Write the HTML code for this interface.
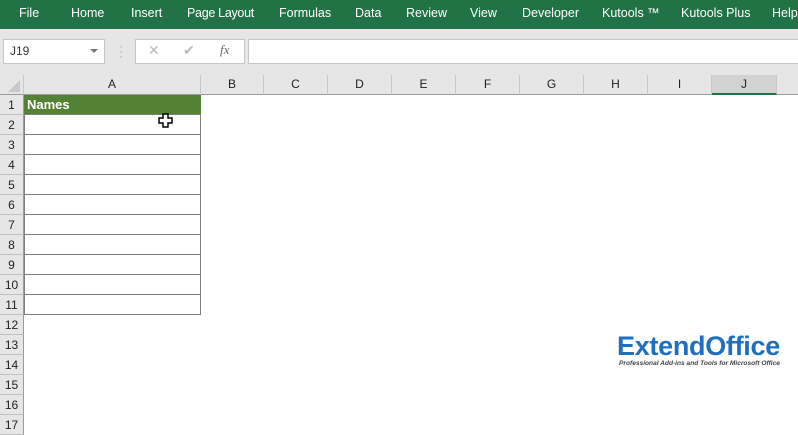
<!DOCTYPE html>
<html><head><style>
*{margin:0;padding:0;box-sizing:border-box}
body{width:798px;height:435px;overflow:hidden;background:#fff;font-family:"Segoe UI","Liberation Sans",sans-serif;position:relative}
.rib{position:absolute;left:0;top:0;width:798px;height:29px;background:#217346;color:#fff;font-size:12.5px}
.rib span{position:absolute;top:6px}
.tb{position:absolute;top:29px;left:0;width:798px;height:46px;background:#e6e6e6}
.box{position:absolute;background:#fff;border:1px solid #c6c6c6}
.ch{position:absolute;top:75px;height:20px;background:#e6e6e6;border-right:1px solid #c8c8c8;border-bottom:1px solid #9b9b9b;font-size:12px;text-align:center;line-height:19px;color:#222}
.rh{position:absolute;left:0;width:24px;height:20px;background:#e6e6e6;border-bottom:1px solid #c0c0c0;border-right:1px solid #9b9b9b;font-size:12px;text-align:center;line-height:20px;color:#222}
.cell{position:absolute;left:24px;width:177px;height:21px;border:1px solid #7f7f7f}
</style></head><body>
<div class="rib">
<span style="left:19px">File</span><span style="left:71px">Home</span><span style="left:131px">Insert</span><span style="left:187px;letter-spacing:-0.3px">Page Layout</span><span style="left:279px">Formulas</span><span style="left:355px">Data</span><span style="left:406px">Review</span><span style="left:470px">View</span><span style="left:522px">Developer</span><span style="left:602px">Kutools ™</span><span style="left:681px">Kutools Plus</span><span style="left:772px">Help</span>
</div>
<div class="tb"></div>
<div class="box" style="left:3px;top:39px;width:102px;height:25px;font-size:12px;line-height:23px;padding-left:6px;color:#333">J19<span style="position:absolute;right:6px;top:9px;border-left:4px solid transparent;border-right:4px solid transparent;border-top:4px solid #777"></span></div>
<div style="position:absolute;left:119px;top:44px;color:#aaa;font-size:12px;line-height:5px">·<br>·<br>·</div>
<div class="box" style="left:135px;top:39px;width:110px;height:25px;color:#bbb;font-size:14px">
<span style="position:absolute;left:12px;top:2px">✕</span><span style="position:absolute;left:47px;top:2px">✔</span><span style="position:absolute;left:84px;top:2px;font-family:'Liberation Serif',serif;font-style:italic;color:#666;font-size:13px">fx</span></div>
<div class="box" style="left:248px;top:39px;width:552px;height:25px"></div>
<div class="ch" style="left:0;width:24px;border-right:1px solid #c8c8c8"><svg width="18" height="18" style="position:absolute;left:4px;top:1px"><polygon points="16,4 16,16 4,16" fill="#c8c8c8"/></svg></div>
<div class="ch" style="left:24px;width:177px">A</div>
<div class="ch" style="left:201px;width:63px">B</div>
<div class="ch" style="left:264px;width:64px">C</div>
<div class="ch" style="left:328px;width:64px">D</div>
<div class="ch" style="left:392px;width:64px">E</div>
<div class="ch" style="left:456px;width:64px">F</div>
<div class="ch" style="left:520px;width:64px">G</div>
<div class="ch" style="left:584px;width:64px">H</div>
<div class="ch" style="left:648px;width:64px">I</div>
<div class="ch" style="left:712px;width:65px;background:#d2d2d2;border-bottom:2px solid #217346">J</div>
<div class="ch" style="left:777px;width:21px;border-right:none"></div>
<div class="rh" style="top:95px">1</div><div class="rh" style="top:115px">2</div><div class="rh" style="top:135px">3</div><div class="rh" style="top:155px">4</div><div class="rh" style="top:175px">5</div><div class="rh" style="top:195px">6</div><div class="rh" style="top:215px">7</div><div class="rh" style="top:235px">8</div><div class="rh" style="top:255px">9</div><div class="rh" style="top:275px">10</div><div class="rh" style="top:295px">11</div><div class="rh" style="top:315px">12</div><div class="rh" style="top:335px">13</div><div class="rh" style="top:355px">14</div><div class="rh" style="top:375px">15</div><div class="rh" style="top:395px">16</div><div class="rh" style="top:415px">17</div>
<div style="position:absolute;left:24px;top:95px;width:177px;height:20px;background:#548235;color:#fff;font-weight:bold;font-size:13px;line-height:20px;padding-left:3px">Names</div>
<div class="cell" style="top:114px"></div><div class="cell" style="top:134px"></div><div class="cell" style="top:154px"></div><div class="cell" style="top:174px"></div><div class="cell" style="top:194px"></div><div class="cell" style="top:214px"></div><div class="cell" style="top:234px"></div><div class="cell" style="top:254px"></div><div class="cell" style="top:274px"></div><div class="cell" style="top:294px"></div>
<svg style="position:absolute;left:158px;top:113px" width="16" height="16"><path d="M5 1h5v4h4v5h-4v4H5v-4H1V5h4z" fill="#fff" stroke="#000" stroke-width="1.5"/></svg>
<div style="position:absolute;left:617px;top:331px;font-family:'Liberation Sans',sans-serif;font-weight:bold;font-size:27px;color:#1e6fc0;letter-spacing:-0.3px">ExtendOffice</div>
<div style="position:absolute;left:619px;top:360px;font-family:'Liberation Sans',sans-serif;font-weight:bold;font-style:italic;font-size:6.6px;color:#444">Professional Add-ins and Tools for Microsoft Office</div>
</body></html>
